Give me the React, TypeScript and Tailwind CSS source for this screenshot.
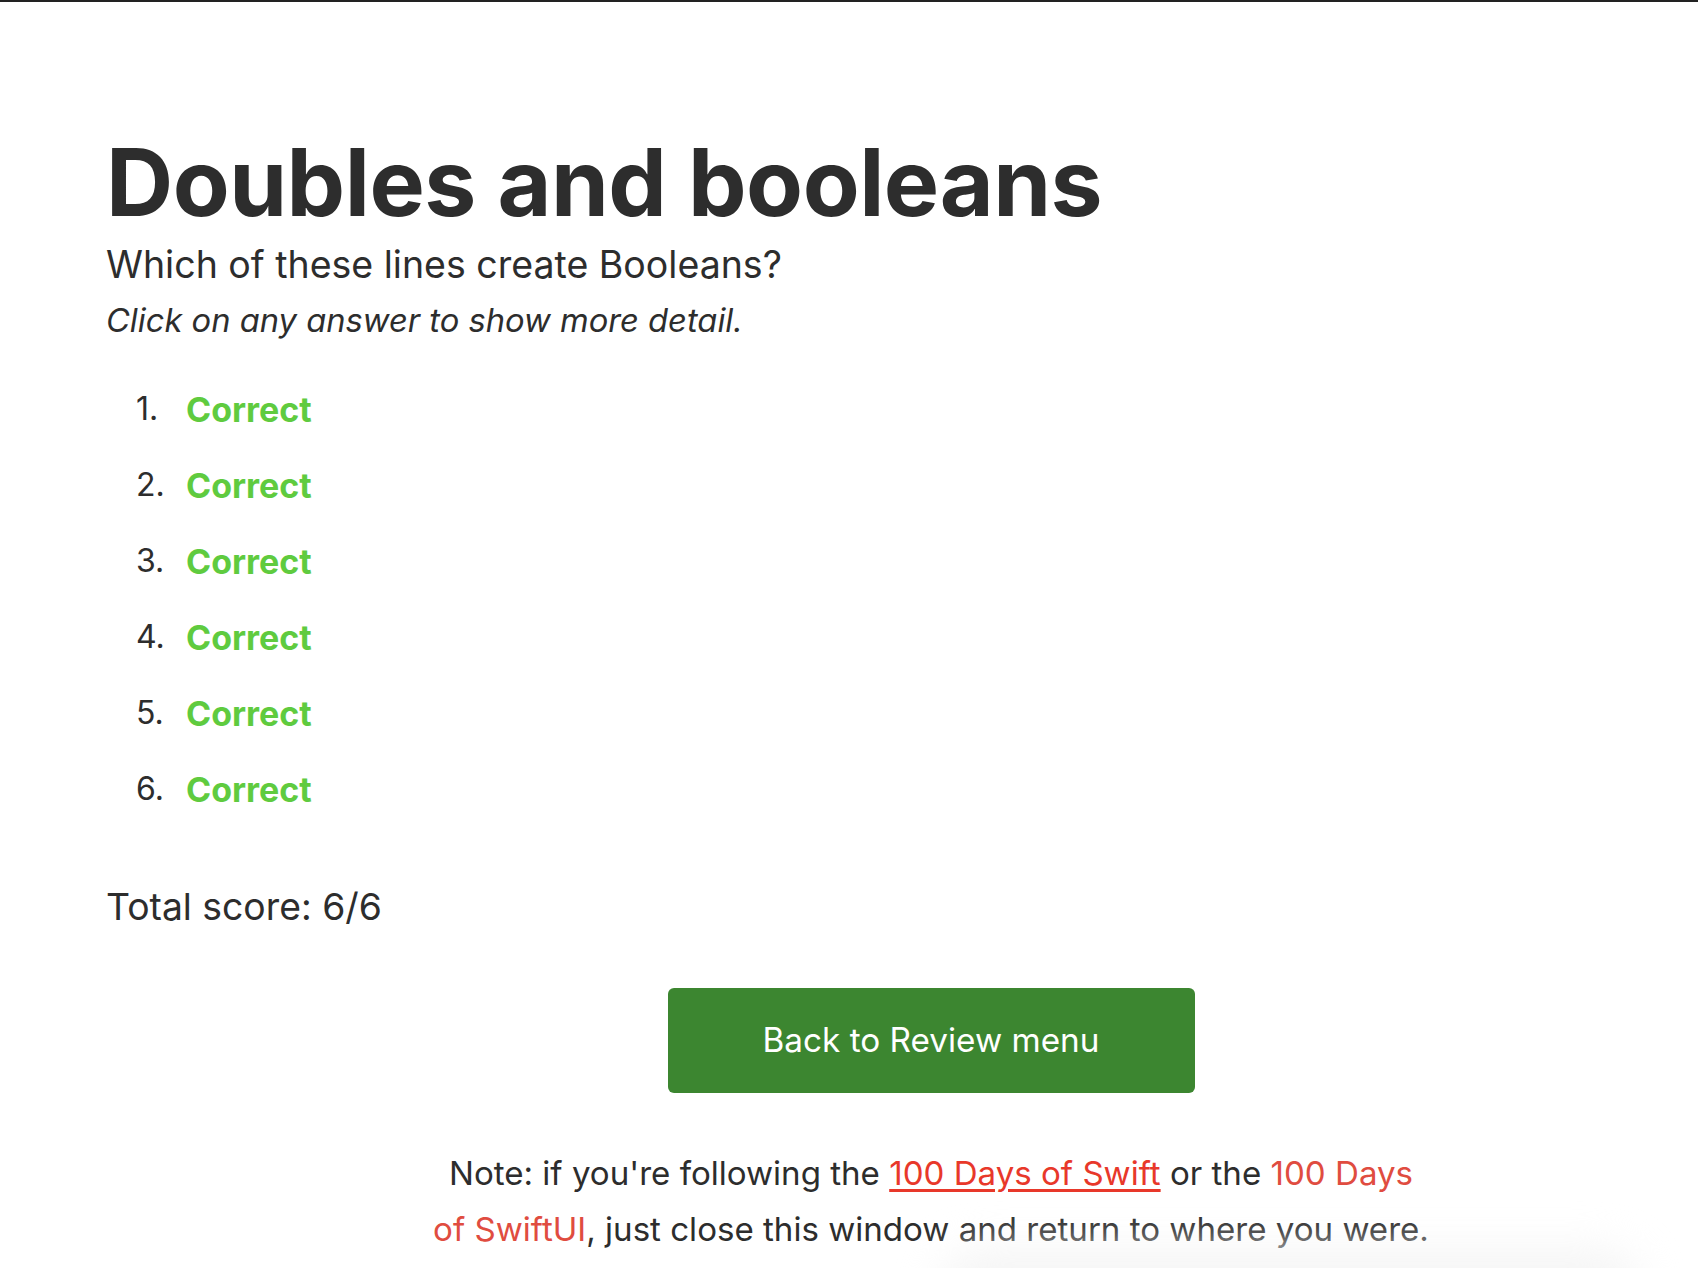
import React from "react";

export default function App() {
  const items = [1, 2, 3, 4, 5, 6];
  return (
    <div className="relative w-full h-[1268px] overflow-hidden bg-white border-t-2 border-[#222222] text-[#2d2d2d]" style={{ fontFamily: "Inter, 'Noto Sans', sans-serif" }}>
      <div className="w-[1756px] pl-[106px]">
        <h1 className="mt-[134px] text-[93px] font-bold leading-none tracking-[-0.5px]">Doubles and booleans</h1>
        <p className="mt-[12px] text-[37.5px] leading-[48px]">Which of these lines create Booleans?</p>
        <p className="mt-[9px] text-[32.7px] leading-[44px] italic">Click on any answer to show more detail.</p>
        <ol className="mt-[29px] pl-[30px] flex flex-col">
          {items.map((n) => (
            <li key={n} className="flex items-center h-[76px] text-[32px]">
              <span className="w-[50px]">{n}.</span>
              <span className="font-bold text-[34px] text-[#5fcb3f]">Correct</span>
            </li>
          ))}
        </ol>
        <p className="mt-[56px] text-[37.3px] leading-[48px]">Total score: 6/6</p>
        <div className="mt-[57px] flex justify-center">
          <button className="w-[527px] h-[105px] rounded-[6px] bg-[#3c8630] text-white text-[33.3px]">Back to Review menu</button>
        </div>
        <div className="mt-[52px] flex justify-center">
          <p className="w-[1040px] text-center text-[33.1px] leading-[56px]">
            Note: if you're following the{" "}
            <a className="text-[#e8382a] underline underline-offset-[4px] decoration-[3px]">100 Days of Swift</a>{" "}
            or the <a className="text-[#e04c40]">100 Days<br />of SwiftUI</a>, just close this window and return to where you were.
          </p>
        </div>
      </div>
      <div className="absolute left-[940px] top-[1248px] w-[700px] h-[80px] rounded-full bg-[#f5f5f5] blur-[20px]" />
    </div>
  );
}
